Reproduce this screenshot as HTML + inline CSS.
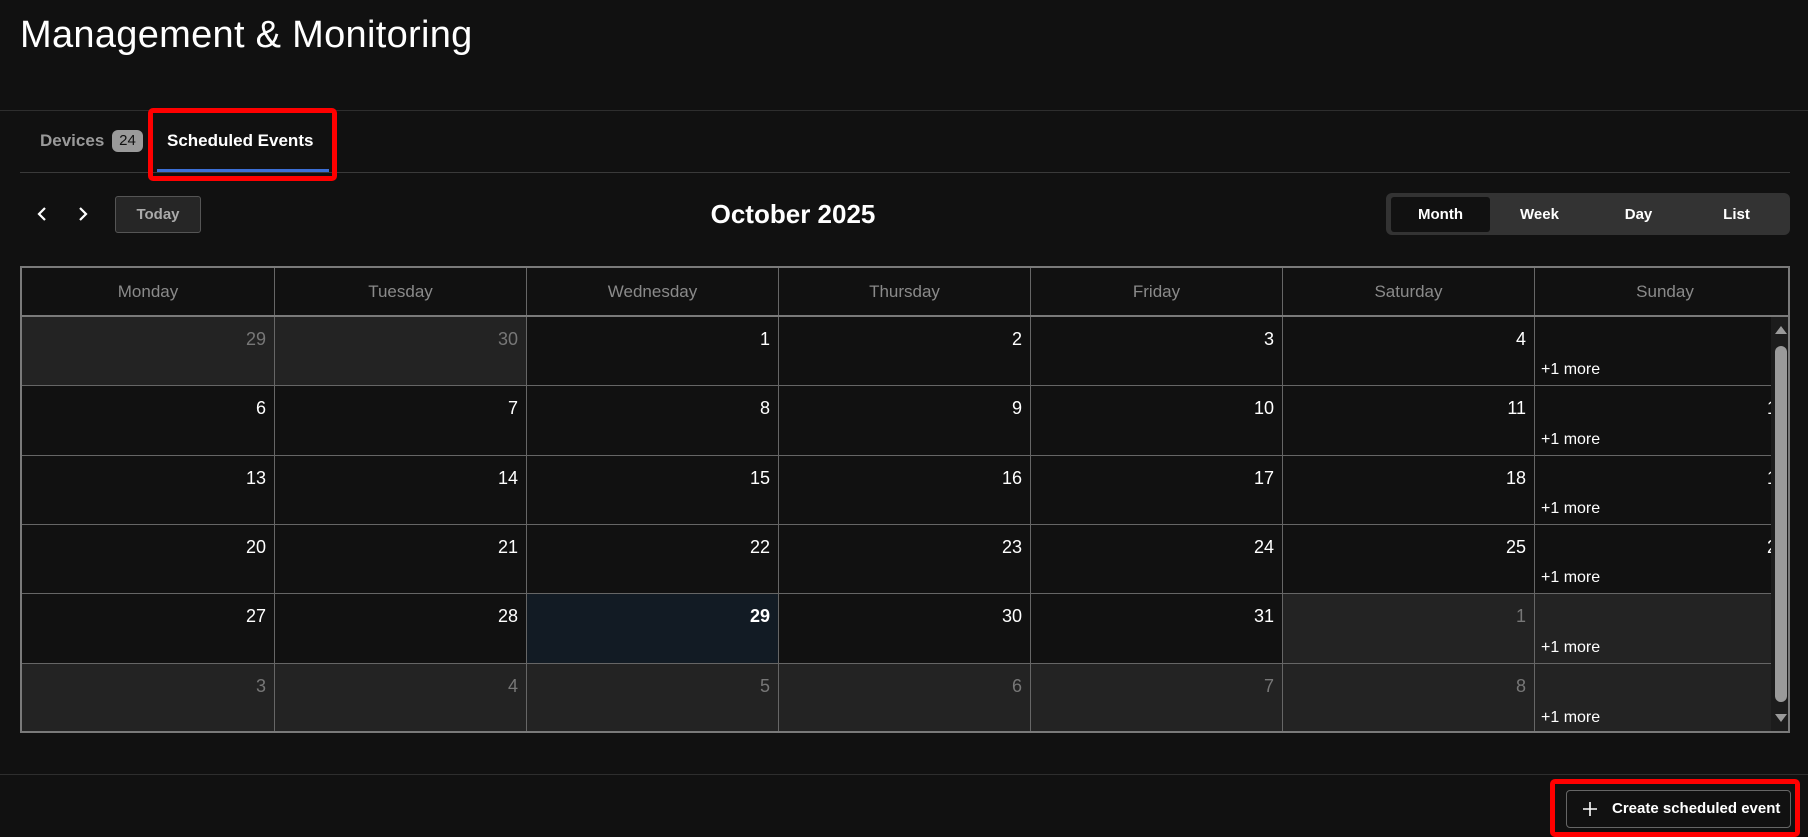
<!DOCTYPE html>
<html><head><meta charset="utf-8"><style>
*{box-sizing:border-box;margin:0;padding:0}
body{width:1808px;height:837px;background:#111111;position:relative;overflow:hidden;font-family:"Liberation Sans",sans-serif;color:#fff}
.a{position:absolute}
.title{left:20px;top:14px;font-size:38px;letter-spacing:0.3px;color:#fff}
.hl{height:1px;background:#2e2e2e}
.tab{font-size:17px;font-weight:bold;top:131px}
.cal{left:20px;top:266px;width:1770px;height:467px;border:2px solid #7a7a7a;overflow:hidden}
.hdr{position:absolute;top:0;height:48px;border-right:1px solid #666;color:#8a8a8a;font-size:17px;text-align:center;line-height:48px}
.cell{position:absolute;border-right:1px solid #666;border-bottom:1px solid #666;background:#111}
.cell.o{background:#232323}
.cell.t{background:#121b24}
.num{position:absolute;right:8px;top:12px;font-size:18px;color:#fff}
.o .num{color:#777}
.t .num{font-weight:bold}
.more{position:absolute;left:6px;bottom:6px;font-size:16px;color:#fff}
.vs{font-size:15px;font-weight:bold;color:#fff;text-align:center;line-height:35px;top:197px;height:35px;width:99px}
</style></head><body>
<div class="a title">Management &amp; Monitoring</div>
<div class="a hl" style="left:0;top:110px;width:1808px"></div>

<div class="a tab" style="left:40px;color:#9a9a9a">Devices</div>
<div class="a" style="left:112px;top:130px;width:31px;height:22px;background:#9a9a9a;border-radius:6px;color:#111;font-size:15px;text-align:center;line-height:22px">24</div>
<div class="a tab" style="left:167px;color:#fff">Scheduled Events</div>
<div class="a hl" style="left:20px;top:172px;width:1770px;background:#3a3a3a"></div>
<div class="a" style="left:157px;top:169px;width:172px;height:3px;background:#3b6fd6"></div>
<div class="a" style="left:148px;top:108px;width:189px;height:73px;border:5px solid #ff0000;border-radius:5px"></div>

<svg class="a" style="left:35px;top:206px" width="14" height="16"><path d="M10 2 L4 8 L10 14" stroke="#fff" stroke-width="2.2" fill="none"/></svg>
<svg class="a" style="left:76px;top:206px" width="14" height="16"><path d="M4 2 L10 8 L4 14" stroke="#fff" stroke-width="2.2" fill="none"/></svg>
<div class="a" style="left:115px;top:196px;width:86px;height:37px;border:1px solid #555;background:#262626;border-radius:3px;color:#aaa;font-size:15px;font-weight:bold;text-align:center;line-height:35px">Today</div>

<div class="a" style="left:693px;top:199px;width:200px;text-align:center;font-size:26px;font-weight:bold">October 2025</div>

<div class="a" style="left:1386px;top:193px;width:404px;height:42px;background:#333;border-radius:6px"></div>
<div class="a" style="left:1391px;top:197px;width:99px;height:35px;background:#111;border-radius:3px"></div>
<div class="a vs" style="left:1391px">Month</div>
<div class="a vs" style="left:1490px">Week</div>
<div class="a vs" style="left:1589px">Day</div>
<div class="a vs" style="left:1687px">List</div>

<div class="a cal">
<div class="hdr" style="left:0;width:253px">Monday</div>
<div class="hdr" style="left:253px;width:252px">Tuesday</div>
<div class="hdr" style="left:505px;width:252px">Wednesday</div>
<div class="hdr" style="left:757px;width:252px">Thursday</div>
<div class="hdr" style="left:1009px;width:252px">Friday</div>
<div class="hdr" style="left:1261px;width:252px">Saturday</div>
<div class="hdr" style="left:1513px;width:260px;border-right:none">Sunday</div>
<div class="a" style="left:0;top:47px;width:1770px;height:2px;background:#7a7a7a"></div>
<div id="g"></div>
<div class="a" style="left:1749px;top:49px;width:20px;height:420px;background:#1c1c1c"></div>
<div class="a" style="left:1753px;top:78px;width:12px;height:356px;background:#9a9a9a;border-radius:6px"></div>
<svg class="a" style="left:1753px;top:57px" width="12" height="10"><path d="M0 9 L6 1 L12 9Z" fill="#9a9a9a"/></svg>
<svg class="a" style="left:1753px;top:445px" width="12" height="10"><path d="M0 1 L6 9 L12 1Z" fill="#9a9a9a"/></svg>
</div>

<div class="a hl" style="left:0;top:774px;width:1808px"></div>
<div class="a" style="left:1566px;top:790px;width:225px;height:38px;border:1px solid #666;border-radius:4px;background:#111"></div>
<svg class="a" style="left:1583px;top:802px" width="14" height="14"><path d="M7 0V14M0 7H14" stroke="#fff" stroke-width="1.6"/></svg>
<div class="a" style="left:1612px;top:800px;font-size:15px;font-weight:bold;color:#fff">Create scheduled event</div>
<div class="a" style="left:1550px;top:779px;width:250px;height:58px;border:5px solid #ff0000;border-radius:5px"></div>

<script>
var rows=[[29,30,1,2,3,4,5],[6,7,8,9,10,11,12],[13,14,15,16,17,18,19],[20,21,22,23,24,25,26],[27,28,29,30,31,1,2],[3,4,5,6,7,8,9]];
var tops=[49,118,188,257,326,396,466];
var lefts=[0,253,505,757,1009,1261,1513,1773];
var h='';
for(var r=0;r<6;r++)for(var c=0;c<7;c++){
 var d=rows[r][c];
 var other=(r==0&&c<2)||(r==4&&c>=5)||r==5;
 var cls='cell'+(other?' o':'')+(r==4&&c==2?' t':'');
 var w=lefts[c+1]-lefts[c];
 h+='<div class="'+cls+'" style="left:'+lefts[c]+'px;top:'+tops[r]+'px;width:'+w+'px;height:'+(tops[r+1]-tops[r])+'px;'+(c==6?'border-right:none;':'')+'"><span class="num">'+d+'</span>'+(c==6?'<span class="more">+1 more</span>':'')+'</div>';
}
document.getElementById('g').innerHTML=h;
</script>
</body></html>
